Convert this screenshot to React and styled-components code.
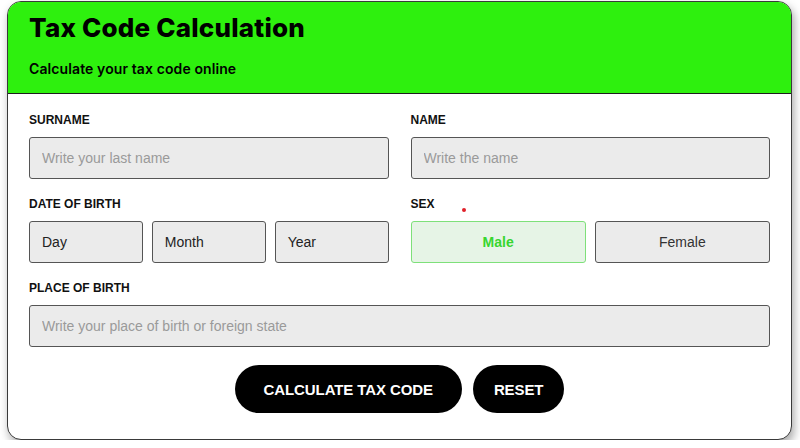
import React from "react";
import styled, { createGlobalStyle } from "styled-components";

const GlobalStyle = createGlobalStyle`
  body {
    margin: 0;
    background: #ffffff;
    font-family: "Liberation Sans", Arial, sans-serif;
  }
  * { box-sizing: border-box; }
`;

const App = () => {
  return (
    <>
      <GlobalStyle />
      <Card>
        <Header>
          <Title>Tax Code Calculation</Title>
          <Subtitle>Calculate your tax code online</Subtitle>
        </Header>
        <Body>
          <Grid>
            <Field>
              <Label>SURNAME</Label>
              <Input placeholder="Write your last name" />
            </Field>
            <Field>
              <Label>NAME</Label>
              <Input placeholder="Write the name" />
            </Field>
            <Field>
              <Label>DATE OF BIRTH</Label>
              <Triple>
                <Select>Day</Select>
                <Select>Month</Select>
                <Select>Year</Select>
              </Triple>
            </Field>
            <Field>
              <Label>
                SEX
                <Dot />
              </Label>
              <Pair>
                <Toggle $active>Male</Toggle>
                <Toggle>Female</Toggle>
              </Pair>
            </Field>
            <Field $wide>
              <Label>PLACE OF BIRTH</Label>
              <Input placeholder="Write your place of birth or foreign state" />
            </Field>
          </Grid>
          <Actions>
            <PillButton $pad={29}>CALCULATE TAX CODE</PillButton>
            <PillButton $pad={21}>RESET</PillButton>
          </Actions>
        </Body>
      </Card>
    </>
  );
};

export default App;

const Card = styled.div`
  width: 785px;
  margin: 1px 0 0 7px;
  border: 1px solid #3a3a3a;
  border-radius: 14px;
  overflow: hidden;
  background: #ffffff;
  box-shadow: 2px 5px 10px rgba(0, 0, 0, 0.35);
`;

const Header = styled.div`
  background: #2ef00e;
  padding: 10px 21px 15px;
  border-bottom: 1px solid #1d1d1d;
`;

const Title = styled.h1`
  margin: 0;
  font-family: "Inter", "Lato", sans-serif;
  font-weight: 800;
  font-size: 26px;
  line-height: 32px;
  color: #000;
  letter-spacing: 0.2px;
`;

const Subtitle = styled.p`
  margin: 16px 0 0;
  font-family: "Inter", "Lato", sans-serif;
  font-weight: 600;
  font-size: 14px;
  line-height: 18px;
  color: #000;
  letter-spacing: 0.1px;
`;

const Body = styled.div`
  padding: 19px 21px 26px;
`;

const Grid = styled.div`
  display: grid;
  grid-template-columns: 1fr 1fr;
  column-gap: 22px;
  row-gap: 18px;
`;

const Field = styled.div`
  display: flex;
  flex-direction: column;
  grid-column: ${(p) => (p.$wide ? "1 / -1" : "auto")};
`;

const Label = styled.label`
  position: relative;
  font-size: 12px;
  font-weight: 700;
  line-height: 14px;
  color: #111;
  margin-bottom: 10px;
`;

const Dot = styled.span`
  position: absolute;
  left: 51px;
  top: 11px;
  width: 4px;
  height: 4px;
  border-radius: 50%;
  background: #e0202a;
`;

const Input = styled.input`
  height: 42px;
  width: 100%;
  padding: 0 12px;
  background: #ebebeb;
  border: 1px solid #555;
  border-radius: 3px;
  font-family: "Liberation Sans", Arial, sans-serif;
  font-size: 14px;
  color: #333;
  outline: none;

  &::placeholder {
    color: #9a9a9a;
  }
`;

const Triple = styled.div`
  display: grid;
  grid-template-columns: 1fr 1fr 1fr;
  gap: 9px;
`;

const Pair = styled.div`
  display: grid;
  grid-template-columns: 1fr 1fr;
  gap: 9px;
`;

const Select = styled.div`
  height: 42px;
  display: flex;
  align-items: center;
  padding: 0 12px;
  background: #ebebeb;
  border: 1px solid #555;
  border-radius: 3px;
  font-size: 14px;
  color: #222;
`;

const Toggle = styled.button`
  height: 42px;
  border-radius: 3px;
  font-family: "Liberation Sans", Arial, sans-serif;
  font-size: 14px;
  cursor: pointer;
  background: ${(p) => (p.$active ? "#e6f4e6" : "#ebebeb")};
  border: 1px solid ${(p) => (p.$active ? "#7ee07a" : "#555")};
  color: ${(p) => (p.$active ? "#37d62f" : "#333")};
  font-weight: ${(p) => (p.$active ? 700 : 400)};
`;

const Actions = styled.div`
  display: flex;
  justify-content: center;
  gap: 11px;
  margin-top: 18px;
`;

const PillButton = styled.button`
  height: 48px;
  padding: 0 ${(p) => p.$pad}px;
  border: none;
  border-radius: 24px;
  background: #000;
  color: #fff;
  font-family: "Liberation Sans", Arial, sans-serif;
  font-size: 15px;
  font-weight: 700;
  letter-spacing: -0.1px;
  cursor: pointer;
`;
